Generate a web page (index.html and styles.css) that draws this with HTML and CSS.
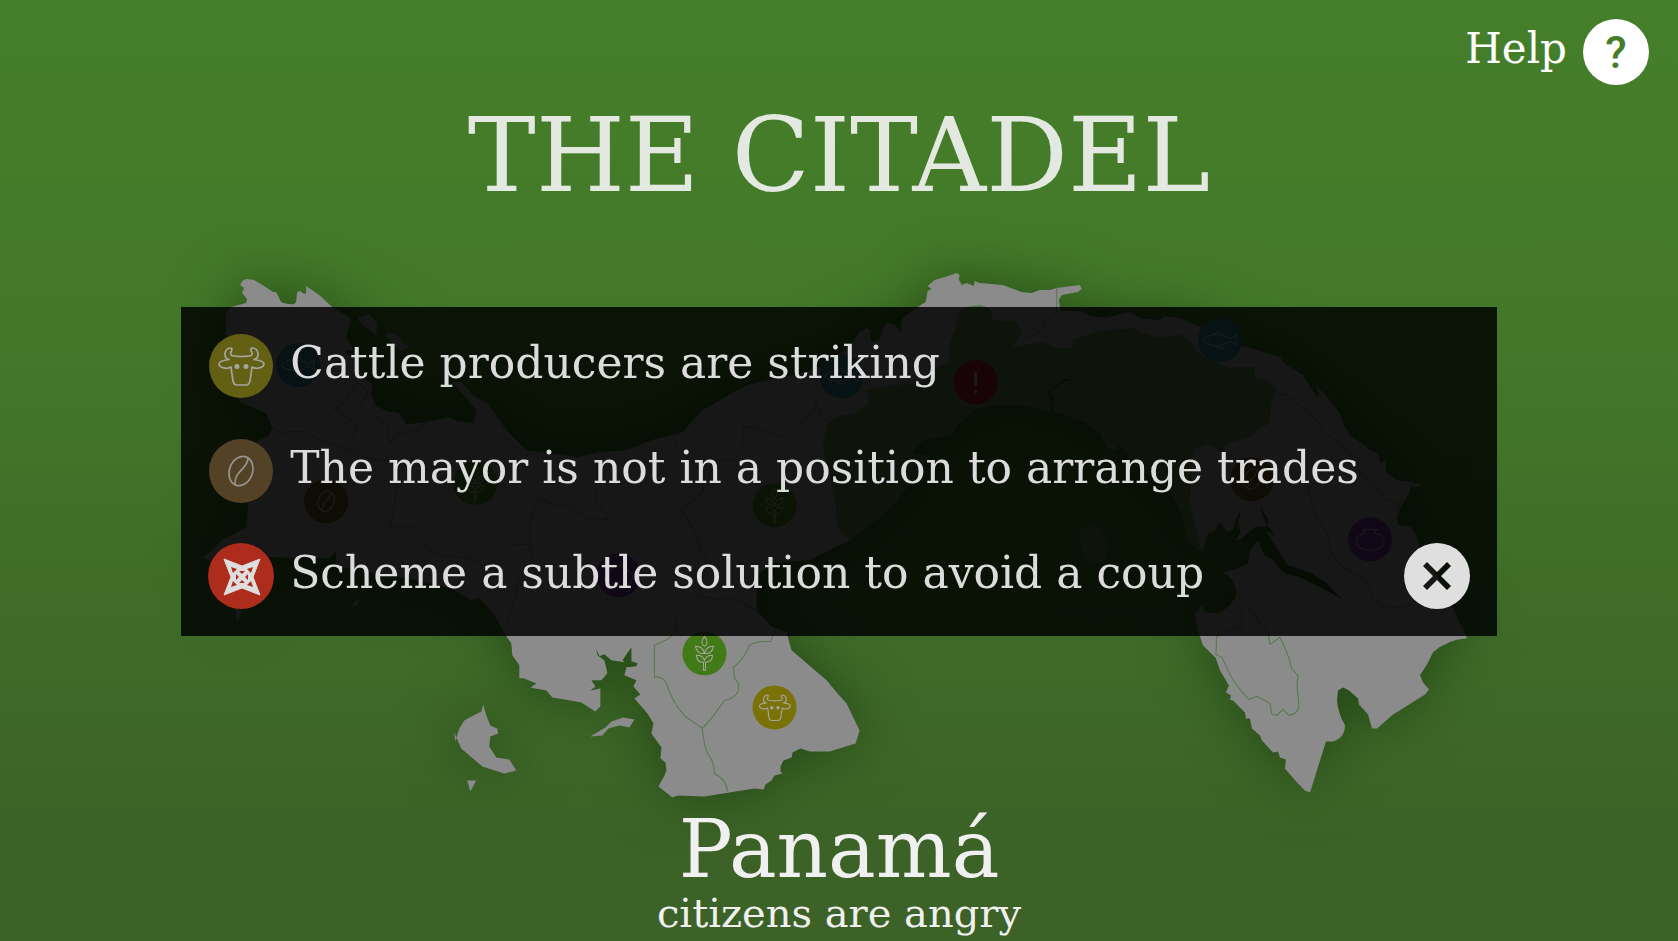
FILE: index.html
```html
<!DOCTYPE html>
<html lang="en">
<head>
<meta charset="utf-8">
<meta name="viewport" content="width=device-width, initial-scale=1">
<title>The Citadel</title>
<link rel="stylesheet" href="styles.css">
</head>
<body>
<svg class="defs" aria-hidden="true">
  <defs>
    <symbol id="cow" viewBox="-32 -32 64 64">
      <path d="M-11-18C-17-17-18-8-12-6.500C-16-6-22-5-22-2C-22 1-15 4-10 1L-8 15Q-7 19-4 19H5Q8 19 9 15L11 1C16 4 23 1 23-2C23-5 17-6 13-6.500C19-8 18-17 12-18C8-18 10-15 11-14C12-11 10-10 8-10Q0-9-7-10C-10-10-11-12-10-14C-9-16-8-18-11-18Z" fill="none" stroke="currentColor" stroke-width="1.700" stroke-linejoin="round"/>
      <circle cx="-4" cy="0.500" r="2.500" fill="currentColor"/><circle cx="5" cy="0.500" r="2.500" fill="currentColor"/>
    </symbol>
    <symbol id="coffee" viewBox="-32 -32 64 64">
      <g fill="none" stroke="currentColor" stroke-width="1.700">
        <ellipse rx="11.500" ry="15" transform="rotate(20)"/>
        <path d="M7-13C7-2-7 0-6 13"/>
      </g>
    </symbol>
    <symbol id="star" viewBox="-33 -33 66 66">
      <path d="M-17-17L1-10L19-17L12 1L19 19L1 12L-17 19L-10 1Z" fill="currentColor" stroke="currentColor" stroke-width="1" stroke-linejoin="round"/>
      <g fill="#ad2c1b">
        <path d="M-10-9L-4-7L-8-3ZM12-9L6-7L10-3ZM-10 11L-4 9L-8 5ZM12 11L6 9L10 5Z"/>
        <path d="M-2-5H4L1-2ZM-2 7H4L1 4Z"/>
        <path d="M-5-2L-2 1L-5 4ZM7-2L4 1L7 4Z"/>
      </g>
    </symbol>
    <symbol id="wheat" viewBox="-22 -22 44 44">
      <g fill="none" stroke="currentColor" stroke-width="1">
        <path d="M0-17C4-12 3-9 0-7C-3-9-4-12 0-17ZM0 0C-1-5-5-7-9-7C-8-2-5 1 0 0C5 1 8-2 9-7C5-7 1-5 0 0ZM-1 17V9C-6 9-8 6-8 2C-4 2-1 4 0 7C1 4 4 2 8 2C8 6 6 9 1 9V17Z"/>
      </g>
    </symbol>
    <symbol id="fish" viewBox="-22 -22 44 44">
      <g fill="none" stroke="currentColor" stroke-width="1">
        <path d="M-17 0C-10-8 2-6 10-1L17-6L15 0L17 5L10 1C2 7-10 7-17 0ZM-7-5Q-3-9 2-7L4-5M-5 6Q-1 9 4 7M-11-2V0"/>
      </g>
    </symbol>
    <symbol id="pot" viewBox="-22 -22 44 44">
      <path d="M-7-10H7L5-8V-6C18-4 18 11 0 11C-18 11-18-4-5-6V-8Z" fill="none" stroke="currentColor" stroke-width="1"/>
    </symbol>
  </defs>
</svg>

<div class="screen">
  <header class="topbar">
    <button class="help" type="button">
      <span class="label">Help</span>
      <span class="help-mark" aria-hidden="true">?</span>
    </button>
  </header>

  <main class="stage">
    <h1 class="title">THE CITADEL</h1>

    <svg class="map" viewBox="160 240 1358 570" role="img" aria-label="Map of Panamá">
      <defs>
        <clipPath id="land-clip">
          <use href="#land-shape"/>
        </clipPath>
      </defs>
      <g class="land">
        <path id="land-shape" d="M227 383V313L232 307L247 303L248 299L243 293L245 288L241 285Q243 280 247 279L255 280L265 286L274 292L277 292L282 302Q290 305 295 304L297 302L298 292L301 291L305 294L307 293V286L320 295L333 307L352 319L347 337L353 347V351L345 350L350 356L357 358L355 363L363 373L366 380L373 383L372 395L376 405L388 411L400 413L407 424L427 422L436 420L450 417L458 421L475 423L477 410L465 395L453 383L462 382L475 396L488 403L508 431L527 450L550 453L577 457L600 452L627 450L655 439L673 435L683 432L703 410L747 385L793 375L820 368L835 357L850 347L860 332L867 328L870 330L872 342L880 340L883 330L887 323L894 324L902 333L901 325L903 318L918 307L926 302L928 291L932 289L928 286L935 280L945 277L957 273L960 275L959 279L962 285L967 283L974 286L975 281L980 283L1003 285L1022 292L1032 293L1040 290L1050 290L1057 288L1080 285L1082 289L1078 292L1062 295L1059 300L1061 311H1082L1090 316L1107 318L1120 314L1130 312L1142 319L1160 320L1165 316L1180 318L1200 327L1215 336L1230 345L1247 347L1267 353L1280 357L1285 364L1303 375L1317 397L1319 394L1315 385L1325 394L1340 413L1343 423L1350 435L1367 447L1371 451L1378 453L1380 462L1386 460L1386 472L1397 480L1413 482L1421 485L1418 487L1411 486L1409 493L1400 508L1397 517L1398 525L1410 526L1417 536L1420 550L1440 580L1457 617L1467 638Q1448 639 1433 652L1427 664L1420 675L1423 682L1429 689L1425 694L1393 714L1377 728L1372 728L1368 714L1359 704L1358 698L1349 690L1343 687L1338 690L1337 700Q1338 713 1345 725Q1345 737 1333 741H1326L1310 792L1305 790L1297 782L1285 768L1286 759L1280 757L1278 751L1273 752L1262 740L1260 735L1252 728L1250 718L1246 718L1245 712L1233 700L1230 699L1231 695L1226 692L1229 685L1220 670L1216 658L1203 645L1198 630L1195 613L1202 605L1205 612L1218 613Q1233 606 1237 593Q1234 577 1223 572L1235 569L1248 563L1250 550L1258 540L1264 554L1274 560Q1281 576 1298 576L1326 590L1344 600L1340 597L1328 584L1312 573L1288 565L1278 550L1266 530L1276 536L1268 526V518L1260 506L1267 527L1256 526L1242 538L1235 541Q1244 531 1238 525L1241 510L1236 518L1233 530L1227 532L1220 522L1214 532L1208 533L1202 552L1188 540L1182 513L1168 487L1133 463L1125 450L1117 441L1118 450H1113L1107 447L1100 432L1085 422L1070 416L1053 410L1055 396L1049 392L1066 381L1078 378L1064 379L1047 392L1050 398V411L1033 407Q1005 402 977 408L960 423L950 435L923 440L912 453L930 456L915 477L892 507L880 517L850 540L810 560L785 562L773 563L757 575V610L773 627L787 632L792 650L827 680L838 693L847 703L860 730L856 743L830 751H810L801 748L793 752L792 757L784 760L781 766V771L783 773L775 775L772 780L766 784L764 789L755 788L705 796L678 795L673 797L659 786L665 775L667 770L666 762L661 758L662 747L652 733L654 723L648 713L635 698L641 694L634 686L637 680L625 675L627 667L637 666L638 663L632 661V647L623 660L618 654L625 662L612 660L605 654L600 656L597 649L598 655L605 660L608 673L602 680L592 680L596 686L591 690L601 688V706L596 711L582 702L565 699L553 697L547 690L531 687L537 683L524 678H520V665L513 655L512 643L507 636L495 615L480 597L472 600L450 587L425 582L395 575H380L360 568L337 568V550L331 557L321 558L270 557H250L246 590L240 620L237 619L236 585L220 565L205 557L223 540L247 527L249 510L248 497L240 450L270 435L273 427L267 413L243 403Z"/>
        <path d="M359 318L370 314L378 324L377 335L360 322ZM385 333L397 334L404 343L411 346L402 351L392 343ZM456 741L460 728L465 720L474 715L482 711L484 704L487 715L491 725L498 728L499 733L491 736L490 746L497 757L510 759L517 770L505 773L483 766L462 748L455 732ZM468 780H477L471 791ZM591 736L606 727L612 721L624 717L635 719L630 727L620 725L609 728L603 735ZM352 605L360 598L358 605Z"/>
        <path class="capital" d="M1080 530L1092 525L1100 526L1108 545L1105 560L1095 564L1083 558ZM1048 534L1056 543L1050 540Z"/>
        <path class="capital" clip-path="url(#land-clip)" d="M960 310L966 307L980 305L987 307L993 312L992 320L1017 322L1022 332L1013 347L1043 342L1057 348H1072L1073 340L1085 336L1100 331L1113 330L1133 328L1140 332L1157 338L1172 336L1183 335L1192 343L1200 355L1215 362L1228 367H1255V378L1268 381L1277 390L1271 403L1270 423L1258 429L1250 437L1228 443L1222 452L1207 444L1193 450L1190 503L1202 552L1150 540L1000 430L900 560L850 540L838 527L835 497L823 447L828 422L840 415L853 415L867 405L870 400L867 390L895 385L923 383L937 367L950 362V345L957 323Z"/>
      </g>
      <g class="borders">
        <path d="M273 427L280 432L305 431L318 439L350 450L372 459L398 461M351 450L357 430L351 419L335 409L345 402L358 382L369 392L360 405L374 415L387 423L391 443L400 433L420 429L427 422M398 461L396 500L391 527L413 525L425 545L440 555L470 558L493 569L515 544H531M531 544V520L538 497L555 505L572 506L590 520L609 519L597 500V457M531 544L535 565L520 580L507 628M673 435L678 449L695 463L705 478L702 493L710 482L712 460L735 459L743 446L744 428L748 426L783 437L795 426L815 412L816 400L820 415L828 422M702 493L682 510L695 530L708 564L703 580L698 596L676 613L677 626L670 638L655 645V677Q663 675 667 683Q674 705 687 717L703 728L712 718L725 700Q736 698 739 690Q740 682 735 678L734 667Q745 658 750 645Q756 641 771 641L777 628M698 596L725 600L733 597L744 603L757 610M703 728Q704 749 712 759Q715 766 715 773Q727 779 728 791M1057 288V312L1045 320L1041 331L1020 340"/>
        <path d="M1277 395L1285 394L1317 420L1323 431L1350 452L1356 467L1380 490L1384 498L1395 502L1401 509M1350 458L1332 461L1308 490L1315 513L1328 535L1332 555L1344 568L1368 582L1373 600L1387 608L1410 605L1425 590M1216 654Q1217 636 1216 637L1234 628L1243 628L1242 617L1239 611L1248 606L1262 625L1268 632L1270 644L1280 637Q1289 655 1292 669L1298 675L1297 685L1299 706Q1298 713 1289 715L1283 709L1277 715L1272 714L1270 703L1257 696L1249 699Q1235 685 1228 670L1222 657Z"/>
      </g>
      <g class="pins">
        <g class="pin fish"><circle cx="299" cy="365" r="22"/><use href="#fish" x="277" y="343" width="44" height="44"/></g>
        <g class="pin fish"><circle cx="842" cy="376" r="22"/><use href="#fish" x="820" y="354" width="44" height="44"/></g>
        <g class="pin fish"><circle cx="1220" cy="340" r="22"/><use href="#fish" x="1198" y="318" width="44" height="44"/></g>
        <g class="pin coffee"><circle cx="327" cy="501" r="22"/><use href="#coffee" x="305" y="479" width="44" height="44"/></g>
        <g class="pin coffee"><circle cx="1252" cy="479" r="22"/><use href="#coffee" x="1230" y="457" width="44" height="44"/></g>
        <g class="pin wheat"><circle cx="476" cy="483" r="22"/><use href="#wheat" x="454" y="461" width="44" height="44"/></g>
        <g class="pin wheat"><circle cx="775" cy="505" r="22"/><use href="#wheat" x="753" y="483" width="44" height="44"/></g>
        <g class="pin wheat"><circle cx="705" cy="653" r="22"/><use href="#wheat" x="683" y="631" width="44" height="44"/></g>
        <g class="pin pot"><circle cx="619" cy="575" r="22"/><use href="#pot" x="597" y="553" width="44" height="44"/></g>
        <g class="pin pot"><circle cx="1370" cy="539" r="22"/><use href="#pot" x="1348" y="517" width="44" height="44"/></g>
        <g class="pin cow"><circle cx="775" cy="707" r="22"/><use href="#cow" x="753" y="685" width="44" height="44"/></g>
        <g class="pin alert"><circle cx="976" cy="382" r="22"/><path d="M976 372V386M976 390V393" fill="none" stroke="currentColor" stroke-width="3"/></g>
      </g>
    </svg>

    <h2 class="country">Panamá</h2>
    <p class="mood">citizens are angry</p>
  </main>
</div>

<div class="overlay">
  <section class="dialog" role="dialog" aria-label="Events">
    <ul class="events">
      <li class="event">
        <svg class="badge badge-cow" viewBox="-33 -33 66 66" aria-hidden="true"><circle r="32"/><use href="#cow" x="-32" y="-32" width="64" height="64"/></svg>
        <span class="label">Cattle producers are striking</span>
      </li>
      <li class="event">
        <svg class="badge badge-coffee" viewBox="-33 -33 66 66" aria-hidden="true"><circle r="32"/><use href="#coffee" x="-32" y="-32" width="64" height="64"/></svg>
        <span class="label">The mayor is not in a position to arrange trades</span>
      </li>
      <li class="event">
        <svg class="badge badge-star" viewBox="-33 -33 66 66" aria-hidden="true"><circle r="33"/><use href="#star" x="-33" y="-33" width="66" height="66"/></svg>
        <span class="label">Scheme a subtle solution to avoid a coup</span>
      </li>
    </ul>
    <button class="close" type="button" aria-label="Close">
      <svg viewBox="-33 -33 66 66" aria-hidden="true">
        <path fill-rule="evenodd" d="M0-33A33 33 0 0 1 0 33A33 33 0 0 1 0-33ZM-14-10L-4 0L-14 10L-10 14L0 4L10 14L14 10L4 0L14-10L10-14L0-4L-10-14Z"/>
      </svg>
    </button>
  </section>
</div>
</body>
</html>
```

FILE: styles.css
```css
* {
  box-sizing: border-box;
}

body {
  margin: 0;
  font-family: "DejaVu Serif", serif;
  color: #f0f0f0;
}

button {
  border: 0;
  padding: 0;
  background: none;
  color: inherit;
  font: inherit;
  cursor: pointer;
}

.defs {
  display: block;
  width: 0;
  height: 0;
}

.screen {
  display: flex;
  flex-direction: column;
  min-height: 100vh;
  overflow: hidden;
  background: linear-gradient(#457f2a, #437829 35%, #3c6227 90%);
}

.topbar {
  display: flex;
  justify-content: flex-end;
  padding: 19px 29px 0;
}

.help {
  display: flex;
  align-items: flex-start;
  gap: 16px;
  color: #fff;
  font-size: 42px;
}

.label {
  line-height: 60px;
}

.help-mark {
  width: 66px;
  height: 66px;
  border-radius: 50%;
  background: #fff;
  color: #457e29;
  font: 500 44px/68px Roboto, sans-serif;
  text-align: center;
}

.stage {
  display: flex;
  flex-direction: column;
  align-items: center;
}

.title {
  margin: 20px 0 33px;
  color: #e3e8e0;
  font-size: 102px;
  font-weight: 400;
  line-height: 102px;
}

.map {
  display: block;
  width: 81%;
  overflow: visible;
}

.land {
  fill: #8b8b8b;
  filter: drop-shadow(0 0 28px rgba(20, 50, 10, 0.6));
}

.capital {
  fill: #55784b;
}

.borders {
  fill: none;
  stroke: #55784b;
  stroke-width: 1;
}

.pin {
  color: #a5a5a0;
}

.pin.fish { fill: #246d79; }
.pin.coffee { fill: #5a431e; }
.pin.wheat { fill: #437a18; }
.pin.pot { fill: #643085; }
.pin.cow { fill: #7a7206; }
.pin.alert { fill: #8c1230; }

.country {
  margin: 0;
  font-size: 80px;
  font-weight: 400;
  line-height: 80px;
}

.mood {
  margin: 0;
  font-size: 40px;
  line-height: 46px;
}

.overlay {
  position: fixed;
  inset: 0;
  display: flex;
  align-items: center;
  justify-content: center;
  padding-top: 2px;
}

.dialog {
  display: flex;
  align-items: flex-end;
  justify-content: space-between;
  width: 78.4%;
  padding: 26px 27px 27px;
  background: rgba(0, 0, 0, 0.835);
  color: #dcdcdc;
}

.events {
  display: flex;
  flex-direction: column;
  gap: 39px;
  margin: 0;
  padding: 0;
  list-style: none;
  font-size: 44px;
}

.event {
  display: flex;
  align-items: flex-start;
  gap: 16px;
}

.badge {
  flex: none;
  width: 66px;
  height: 66px;
}

.badge-cow {
  fill: #636014;
  color: #a5a5a0;
}

.badge-coffee {
  fill: #534226;
  color: #979590;
}

.badge-star {
  fill: #ad2c1b;
  color: #dedede;
}

.close {
  flex: none;
  width: 66px;
  height: 66px;
}

.close svg {
  display: block;
  fill: #dfdfdf;
}
```
